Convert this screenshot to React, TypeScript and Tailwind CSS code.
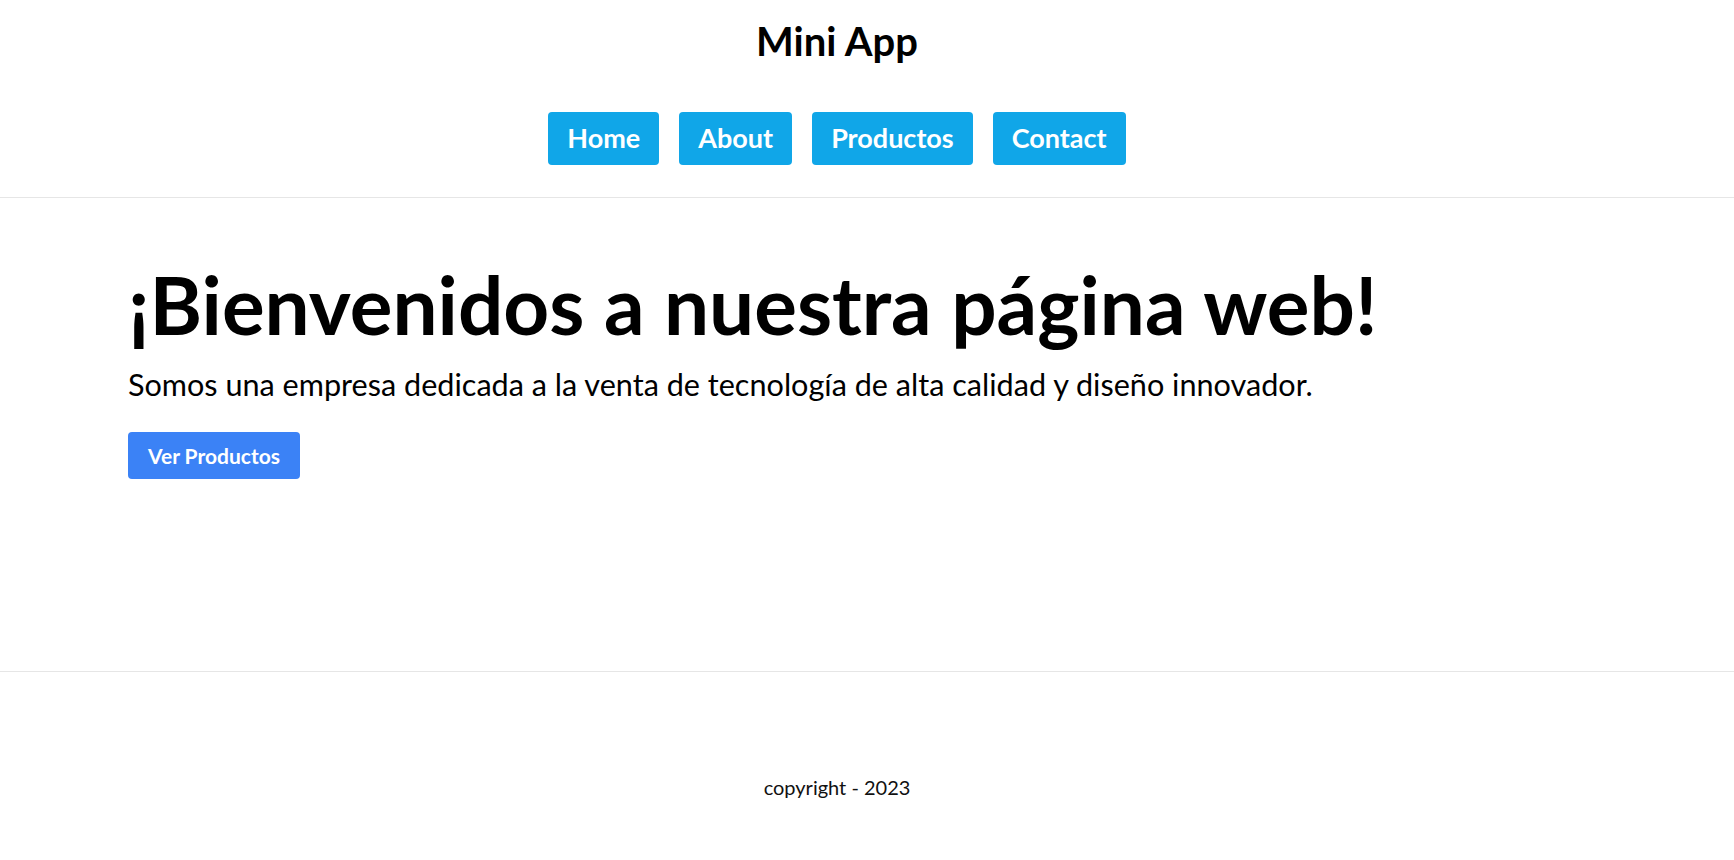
export default function App() {
  const links = ['Home', 'About', 'Productos', 'Contact']

  return (
    <div className="min-h-screen bg-white text-black font-['Lato','Noto_Sans',sans-serif]">
      <header className="border-b border-[#e6e6e6] pt-[18px] pb-[32px]">
        <div className="flex flex-col items-center pr-[60px]">
          <h1 className="text-[40px] leading-[46px] font-bold">Mini App</h1>
          <nav className="mt-[48px] flex gap-5">
            {links.map((link) => (
              <a
                key={link}
                href="#"
                className="h-[53px] px-[19px] flex items-center rounded-[4px] bg-[#10a6e8] text-white text-[27px] font-bold"
              >
                {link}
              </a>
            ))}
          </nav>
        </div>
      </header>

      <main className="h-[473px] px-[128px] pt-[70px]">
        <h2 className="text-[80px] leading-[72px] font-bold">
          ¡Bienvenidos a nuestra página web!
        </h2>
        <p className="mt-[29px] text-[30.6px] leading-[32px]">
          Somos una empresa dedicada a la venta de tecnología de alta calidad y diseño innovador.
        </p>
        <button className="mt-[31px] h-[47px] px-[20px] rounded-[4px] bg-[#3b82f6] text-white text-[21px] font-bold">
          Ver Productos
        </button>
      </main>

      <footer className="border-t border-[#e6e6e6] pt-[103px] pb-[60px]">
        <p className="pr-[60px] text-center text-[20px] leading-[24px] text-[#111]">
          copyright - 2023
        </p>
      </footer>
    </div>
  )
}
